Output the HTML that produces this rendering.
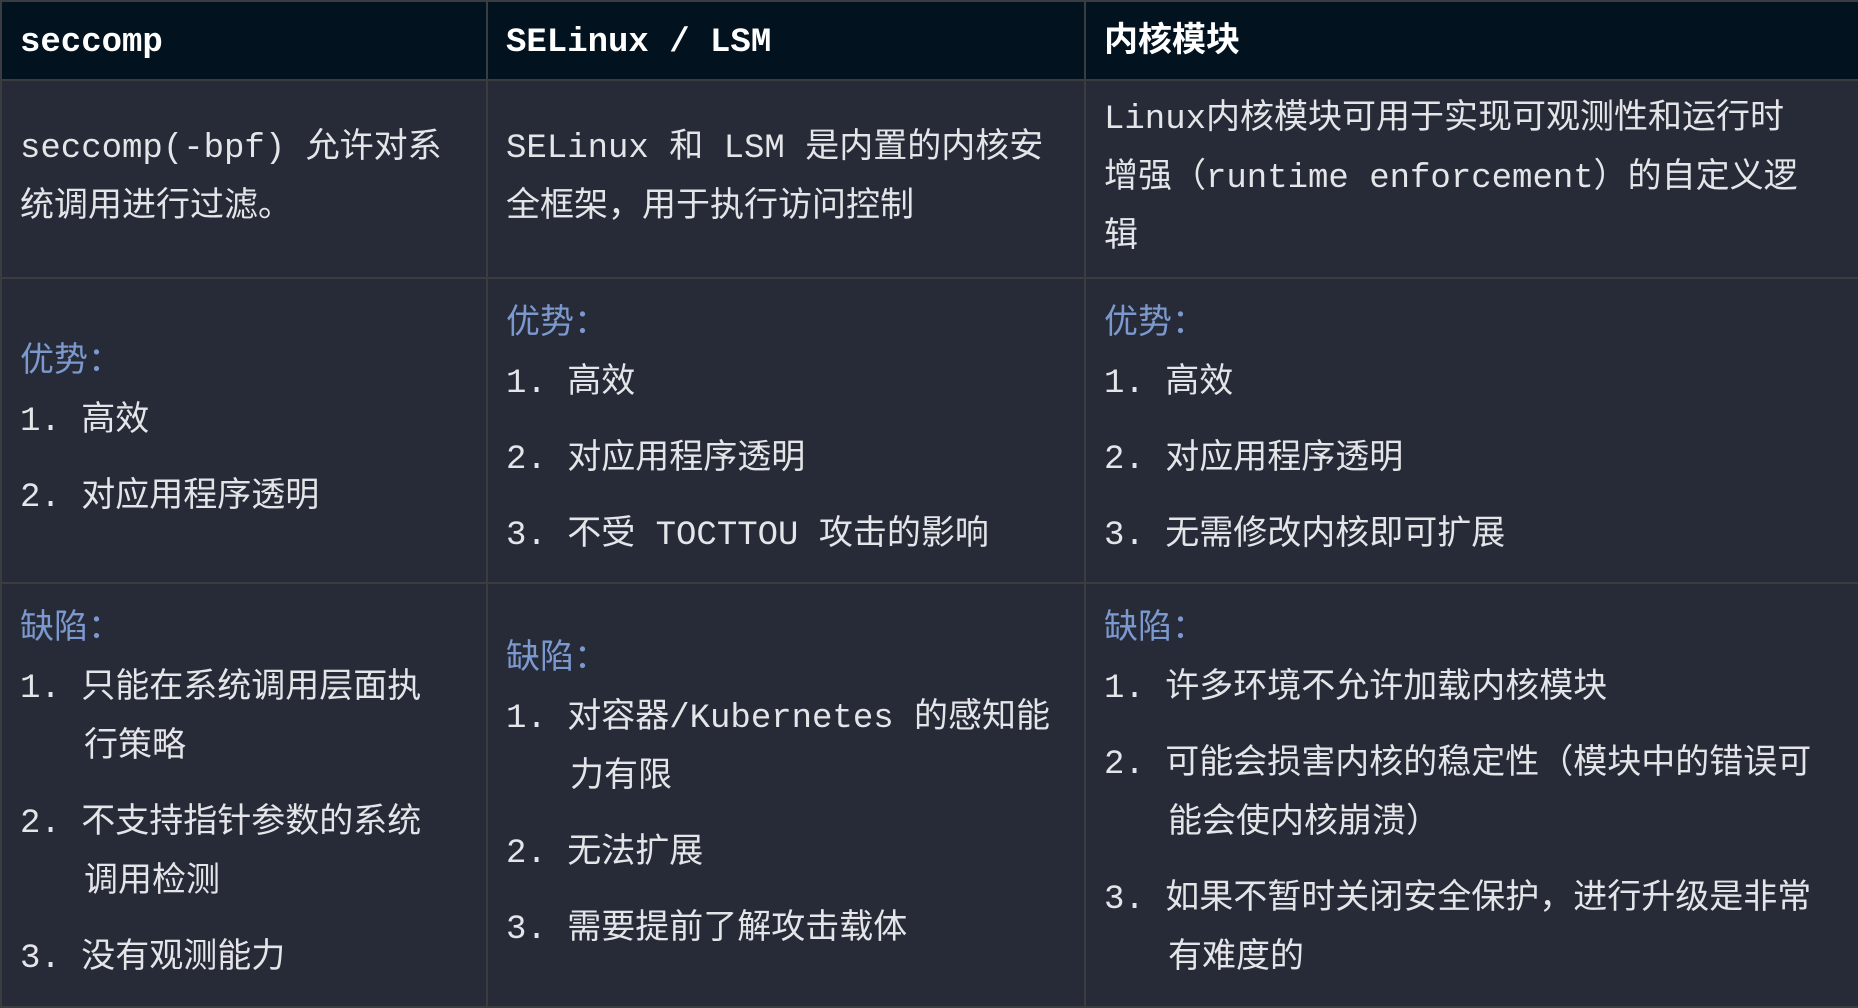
<!DOCTYPE html>
<html><head><meta charset="utf-8"><style>
html,body{margin:0;padding:0;background:#262b37;}
body{width:1858px;height:1006px;overflow:hidden;font-family:"Liberation Mono","Noto Sans CJK SC",monospace;font-size:34px;color:#e4e5e8;}
table{border-collapse:collapse;table-layout:fixed;position:absolute;left:0;top:0;width:1858px;}
td,th{border:2px solid #3a3c40;padding:0 18px 0 18px;vertical-align:middle;text-align:left;white-space:nowrap;line-height:59px;}
th{background:#02121f;color:#fff;font-weight:bold;height:71px;padding-top:6px;}
.l{color:#7c99cf;}
.it{padding-left:64px;text-indent:-64px;margin-top:17px;}
.it.f{margin-top:0}
</style></head><body>
<table>
<colgroup><col style="width:486px"><col style="width:598px"><col style="width:774px"></colgroup>
<tr><th>seccomp</th><th>SELinux / LSM</th><th>内核模块</th></tr>
<tr style="height:198px"><td>seccomp(-bpf) 允许对系<br>统调用进行过滤。</td><td>SELinux 和 LSM 是内置的内核安<br>全框架，用于执行访问控制</td><td>Linux内核模块可用于实现可观测性和运行时<br>增强（runtime enforcement）的自定义逻<br>辑</td></tr>
<tr style="height:305px"><td><div class="l">优势：</div><div class="it f">1. 高效</div><div class="it">2. 对应用程序透明</div></td>
<td><div class="l">优势：</div><div class="it f">1. 高效</div><div class="it">2. 对应用程序透明</div><div class="it">3. 不受 TOCTTOU 攻击的影响</div></td>
<td><div class="l">优势：</div><div class="it f">1. 高效</div><div class="it">2. 对应用程序透明</div><div class="it">3. 无需修改内核即可扩展</div></td></tr>
<tr style="height:424px"><td><div class="l">缺陷：</div><div class="it f">1. 只能在系统调用层面执<br>行策略</div><div class="it">2. 不支持指针参数的系统<br>调用检测</div><div class="it">3. 没有观测能力</div></td>
<td><div class="l">缺陷：</div><div class="it f">1. 对容器/Kubernetes 的感知能<br>力有限</div><div class="it">2. 无法扩展</div><div class="it">3. 需要提前了解攻击载体</div></td>
<td><div class="l">缺陷：</div><div class="it f">1. 许多环境不允许加载内核模块</div><div class="it">2. 可能会损害内核的稳定性（模块中的错误可<br>能会使内核崩溃）</div><div class="it">3. 如果不暂时关闭安全保护，进行升级是非常<br>有难度的</div></td></tr>
</table>
</body></html>
